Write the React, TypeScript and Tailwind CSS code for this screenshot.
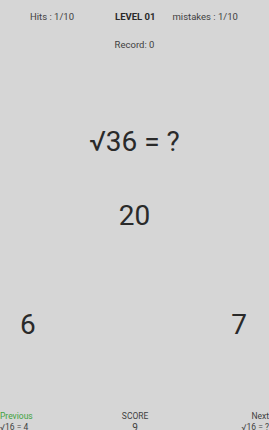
export default function App() {
  return (
    <div
      className="w-[269px] h-[430px] overflow-hidden bg-[#d6d6d6] text-[#2a2a2a]"
      style={{ fontFamily: "Roboto, 'Noto Sans', sans-serif" }}
    >
      {/* Header */}
      <div className="h-[34px] flex items-center text-[9.5px] text-[#3f3f3f] whitespace-nowrap">
        <span className="ml-[30px]">Hits : 1/10</span>
        <span className="ml-[41px] font-bold text-[#2a2a2a]">LEVEL 01</span>
        <span className="ml-[17px]">mistakes : 1/10</span>
      </div>
      <div className="h-[22px] flex items-center justify-center text-[9.5px] text-[#3f3f3f]">
        Record: 0
      </div>

      {/* Question */}
      <div className="mt-[68px] h-[36px] flex items-center justify-center text-[28px] leading-none">
        √36 = ?
      </div>
      <div className="mt-[38px] h-[36px] flex items-center justify-center text-[28px] leading-none">
        20
      </div>

      {/* Answers */}
      <div className="mt-[73px] h-[36px] flex items-center justify-between pl-[20px] pr-[22px] text-[28px] leading-none">
        <span>6</span>
        <span>7</span>
      </div>

      {/* Footer */}
      <div className="mt-[68px] flex justify-between text-[8.5px] leading-[11px] whitespace-nowrap">
        <div className="flex flex-col">
          <span className="text-[#3fa33f]">Previous</span>
          <span className="text-[#3f3f3f]">√16 = 4</span>
        </div>
        <div className="flex flex-col items-center text-[#3f3f3f] -ml-[4px]">
          <span>SCORE</span>
          <span className="text-[10px]">9</span>
        </div>
        <div className="flex flex-col items-end text-[#3f3f3f]">
          <span>Next</span>
          <span>√16 = ?</span>
        </div>
      </div>
    </div>
  );
}
